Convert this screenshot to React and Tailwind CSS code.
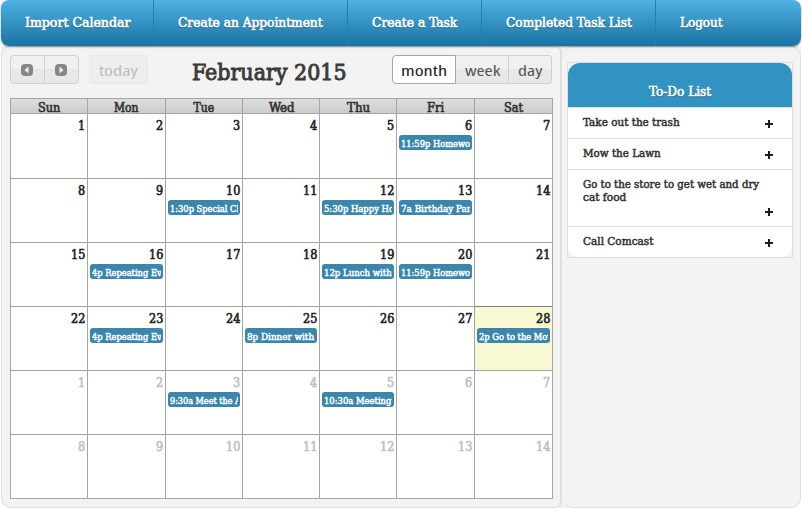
import { useLayoutEffect, useRef, useState } from 'react';

// Condenses its text horizontally so that it occupies `w` pixels.
function Slab({ w, className = '', children }) {
  const ref = useRef(null);
  const [scale, setScale] = useState(1);
  useLayoutEffect(() => {
    setScale(w / ref.current.offsetWidth);
  }, [w, children]);
  return (
    <span className={`inline-flex shrink-0 whitespace-nowrap ${className}`} style={{ width: w }}>
      <span ref={ref} className="inline-block shrink-0 origin-left" style={{ transform: `scaleX(${scale})` }}>
        {children}
      </span>
    </span>
  );
}

const nav = [
  ['Import Calendar', 105, 'w-[153px]'],
  ['Create an Appointment', 145, 'w-[194px]'],
  ['Create a Task', 85, 'w-[134px]'],
  ['Completed Task List', 126, 'w-[174px]'],
  ['Logout', 43, 'w-[145px]'],
];

const heads = [['Sun', 22], ['Mon', 25], ['Tue', 21], ['Wed', 25], ['Thu', 23], ['Fri', 17], ['Sat', 19]];

const events = {
  5: ['11:59p Homewo', 69],
  9: ['1:30p Special Cl', 69],
  11: ['5:30p Happy Ho', 70],
  12: ['7a Birthday Par', 70],
  15: ['4p Repeating Ev', 70],
  18: ['12p Lunch with', 68],
  19: ['11:59p Homewo', 69],
  22: ['4p Repeating Ev', 70],
  24: ['8p Dinner with', 67],
  27: ['2p Go to the Mov', 73],
  30: ['9:30a Meet the A', 71],
  32: ['10:30a Meeting', 67],
};

const tasks = [
  [['Take out the trash', 97]],
  [['Mow the Lawn', 78]],
  [['Go to the store to get wet and dry', 176], ['cat food', 43]],
  [['Call Comcast', 70]],
];

const columns = 'grid grid-cols-[77px_78px_77px_77px_77px_78px_78px]';

function Arrow({ flip }) {
  return (
    <svg className="size-3" viewBox="0 0 12 12">
      <rect width="12" height="12" rx="4" fill="#858585" />
      <path d={flip ? 'M4.5 2.5v7L8.5 6z' : 'M7.5 2.5v7L3.5 6z'} fill="#f3f3f3" />
    </svg>
  );
}

function Plus() {
  return (
    <svg className="size-2" viewBox="0 0 8 8">
      <path d="M3 0h2v3h3v2H5v3H3V5H0V3h3z" fill="#1b1b1b" />
    </svg>
  );
}

export default function App() {
  return (
    <div className="flex h-[509px] w-[802px] flex-col overflow-hidden bg-white pl-px font-['DejaVu_Serif_Condensed','DejaVu_Serif',serif] font-normal text-[#333] font-stretch-condensed [-webkit-text-stroke:0.6px]">
      <nav className="z-10 flex h-[46px] w-[800px] shrink-0 overflow-hidden rounded-lg bg-linear-to-b from-[#4db2e4] to-[#1973a3] shadow-[0_1px_2px_rgba(0,0,0,0.4)]">
        {nav.map(([label, w, cls], i) => (
          <a key={label} className={`flex h-full shrink-0 items-center pl-6 text-[13px] leading-4 text-white text-shadow-[0_1px_1px_rgba(0,0,0,0.5)] ${cls} ${i < 4 ? 'border-r border-[#1b83b3]' : ''}`}>
            <Slab w={w} className="-mt-px">{label}</Slab>
          </a>
        ))}
      </nav>

      <div className="flex h-[462px] w-[800px] rounded-b-[10px] bg-[#f3f3f3]">
        <main className="h-[462px] w-[561px] rounded-tl-lg rounded-tr-md rounded-br-md rounded-bl-[10px] border border-r-2 border-[#dfdfdf] pl-2">
          <header className="flex h-[51px] pt-2 font-['Open_Sans',sans-serif] text-[15px] font-normal [-webkit-text-stroke:0]">
            <div className="flex h-[29px] w-[69px] overflow-hidden rounded border border-[#d0d0d0] bg-linear-to-b from-[#f1f1f1] from-50% to-[#e8e8e8] to-50%">
              <button className="flex w-[34px] items-center border-r border-[#d0d0d0] pl-[10px]"><Arrow /></button>
              <button className="flex w-[33px] items-center pl-[10px]"><Arrow flip /></button>
            </div>
            <button className="ml-[10px] flex h-[29px] w-[59px] items-center justify-center rounded border border-[#e8e8e8] bg-[#eeeeee] pt-px text-[#bdbdbd]">
              <Slab w={39}>today</Slab>
            </button>
            <h2 className="ml-[44px] w-[200px] font-['DejaVu_Serif_Condensed','DejaVu_Serif',serif] text-[22.5px] leading-[34px] text-[#3a3a3a] [-webkit-text-stroke:0.9px]">
              <Slab w={155}>February 2015</Slab>
            </h2>
            <div className="flex h-[29px] w-[160px] text-[#555]">
              <button className="z-10 flex w-16 items-center justify-center rounded-l border border-[#a5a5a5] bg-white pt-px text-[#222]"><Slab w={46}>month</Slab></button>
              <button className="flex w-[53px] items-center justify-center border-y border-r border-[#d0d0d0] bg-linear-to-b from-[#f0f0f0] from-50% to-[#e8e8e8] to-50% pt-px"><Slab w={35}>week</Slab></button>
              <button className="flex w-[43px] items-center justify-center rounded-r border border-l-0 border-[#d0d0d0] bg-linear-to-b from-[#f0f0f0] from-50% to-[#e8e8e8] to-50% pt-px"><Slab w={25}>day</Slab></button>
            </div>
          </header>

          <div className="w-[543px] border-t border-l border-[#a5a5a5]">
            <div className={`${columns} h-[15px] bg-linear-to-b from-[#dedede] to-[#cbcbcb] text-[12px] leading-[18px]`}>
              {heads.map(([d, w]) => (
                <div key={d} className="flex h-[15px] justify-center border-r border-b border-[#a5a5a5]">
                  <Slab w={w}>{d}</Slab>
                </div>
              ))}
            </div>
            <div className={columns}>
              {Array.from({ length: 42 }, (_, i) => {
                const day = (i % 28) + 1;
                const ev = events[i];
                return (
                  <div
                    key={i}
                    className={`flex flex-col overflow-hidden border-r border-b border-[#a5a5a5] pr-[2px] pl-[2px] ${i < 7 ? 'h-[65px]' : 'h-16'} ${i === 27 ? 'bg-[#f8f8d2]' : 'bg-white'} ${i === 20 ? 'border-b-[#808080]' : ''}`}
                  >
                    <div className={`flex h-[21px] shrink-0 justify-end pt-[4px] text-[12.5px] leading-4 ${i > 27 ? 'text-[#bfbfbf]' : 'text-[#222]'}`}>
                      <Slab w={day > 9 ? 14 : 7}>{day}</Slab>
                    </div>
                    {ev && (
                      <div className="h-[15px] shrink-0 rounded-[3px] bg-[#3a87ad] px-[2px] text-[9.5px] leading-[17px] text-white [-webkit-text-stroke:0.45px]">
                        <div className="h-[15px] overflow-hidden"><Slab w={ev[1]}>{ev[0]}</Slab></div>
                      </div>
                    )}
                  </div>
                );
              })}
            </div>
          </div>
        </main>

        <aside className="h-[462px] w-[239px] rounded-[10px] border border-l-0 border-[#dfdfdf] pt-[15px] pl-[5px]">
          <section className="w-[226px] border border-[#dedede]">
            <h3 className="flex h-11 justify-center rounded-t-xl bg-[#3093c1] pt-[21px] text-[13px] leading-4 text-white text-shadow-[0_1px_1px_rgba(0,0,0,0.5)]">
              <Slab w={62}>To-Do List</Slab>
            </h3>
            <ul className="overflow-hidden rounded-b-xl text-[11.5px] leading-[13px] [-webkit-text-stroke:0.5px]">
              {tasks.map((lines, i) => (
                <li
                  key={i}
                  className={`flex border-t border-[#dedede] bg-white pt-2 pr-[19px] pl-[15px] ${lines.length > 1 ? 'h-[57px] flex-col' : 'h-[31px] justify-between'}`}
                >
                  <div className="flex flex-col">
                    {lines.map(([t, w]) => <Slab key={t} w={w}>{t}</Slab>)}
                  </div>
                  <div className={lines.length > 1 ? 'mt-1 self-end' : 'mt-1'}><Plus /></div>
                </li>
              ))}
            </ul>
          </section>
        </aside>
      </div>
    </div>
  );
}
